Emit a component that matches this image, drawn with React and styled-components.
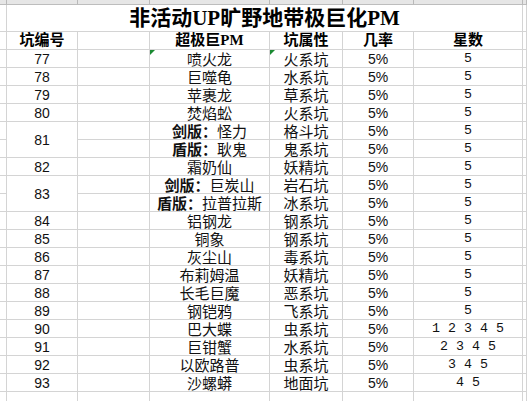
import React from 'react'
import styled, { createGlobalStyle, css } from 'styled-components'

// STYLES
const GlobalStyle = createGlobalStyle`
  html, body {
    margin: 0;
    padding: 0;
    background: #fff;
  }
  body {
    font-family: "Noto Sans CJK SC", sans-serif;
    color: #000;
    overflow: hidden;
  }
`

const Sheet = styled.div`
  display: grid;
  grid-template-columns: 7px 71px 72px 120px 73px 71px 109px 1fr;
  grid-template-rows: 5px 27px 18px;
  grid-auto-rows: 18px;
  width: 527px;
  height: 401px;
  overflow: hidden;
  background: #fff;
`

const Cell = styled.div`
  position: relative;
  display: flex;
  align-items: center;
  justify-content: center;
  box-sizing: border-box;
  border-right: 1px solid #d4d4d4;
  border-bottom: 1px solid #d4d4d4;
  white-space: nowrap;
  font-size: 15px;
  line-height: 1;
  color: #111;
  ${p => p.$rows && css`grid-row: span ${p.$rows};`}
  ${p => p.$cols && css`grid-column: span ${p.$cols};`}
`

const ColHead = styled(Cell)`
  background: #e6e6e6;
  border-right-color: #b9b9b9;
  border-bottom-color: #bdbdbd;
`

const Title = styled(Cell)`
  font-family: "Liberation Serif", "Noto Sans CJK SC", serif;
  font-weight: bold;
  font-size: 21px;
  color: #000;
  padding-top: 1px;
`

const Head = styled(Cell)`
  font-family: "Liberation Serif", "Noto Sans CJK SC", serif;
  font-weight: bold;
  font-size: 15px;
  color: #000;
`

const Num = styled(Cell)`
  font-family: "Liberation Sans", sans-serif;
  font-size: 14px;
`

const Stars = styled(Cell)`
  font-family: "Liberation Mono", monospace;
  font-size: 13.3px;
  white-space: pre;
`

const Tag = styled.b`
  font-weight: bold;
`

const Flag = styled.span`
  position: absolute;
  top: 0;
  left: 0;
  width: 0;
  height: 0;
  border-top: 5px solid #1a8a32;
  border-right: 5px solid transparent;
`

const rows = [
  { no: '77', name: '喷火龙', type: '火系坑', stars: '5', flag: true },
  { no: '78', name: '巨噬龟', type: '水系坑', stars: '5' },
  { no: '79', name: '苹裹龙', type: '草系坑', stars: '5' },
  { no: '80', name: '焚焰蚣', type: '火系坑', stars: '5' },
  { no: '81', subs: [
    { tag: '剑版：', name: '怪力', type: '格斗坑', stars: '5' },
    { tag: '盾版：', name: '耿鬼', type: '鬼系坑', stars: '5' },
  ] },
  { no: '82', name: '霜奶仙', type: '妖精坑', stars: '5' },
  { no: '83', subs: [
    { tag: '剑版：', name: '巨炭山', type: '岩石坑', stars: '5' },
    { tag: '盾版：', name: '拉普拉斯', type: '冰系坑', stars: '5' },
  ] },
  { no: '84', name: '铝钢龙', type: '钢系坑', stars: '5' },
  { no: '85', name: '铜象', type: '钢系坑', stars: '5' },
  { no: '86', name: '灰尘山', type: '毒系坑', stars: '5' },
  { no: '87', name: '布莉姆温', type: '妖精坑', stars: '5' },
  { no: '88', name: '长毛巨魔', type: '恶系坑', stars: '5' },
  { no: '89', name: '钢铠鸦', type: '飞系坑', stars: '5' },
  { no: '90', name: '巴大蝶', type: '虫系坑', stars: '1 2 3 4 5' },
  { no: '91', name: '巨钳蟹', type: '水系坑', stars: '2 3 4 5' },
  { no: '92', name: '以欧路普', type: '虫系坑', stars: '3 4 5' },
  { no: '93', name: '沙螺蟒', type: '地面坑', stars: '4 5' },
]

const Rest = ({ item }) => (
  <>
    <Cell />
    <Cell>
      {item.flag && <Flag />}
      {item.tag && <Tag>{item.tag}</Tag>}
      {item.name}
    </Cell>
    <Cell>
      {item.flag && <Flag />}
      {item.type}
    </Cell>
    <Num>5%</Num>
    <Stars>{item.stars}</Stars>
    <Cell />
  </>
)

const App = () => {
  return (
    <>
      <GlobalStyle />
      <Sheet>
        {[0, 1, 2, 3, 4, 5, 6, 7].map(i => <ColHead key={'h' + i} />)}

        <Cell />
        <Title $cols={6}>非活动UP旷野地带极巨化PM</Title>
        <Cell />

        <Cell />
        <Head>坑编号</Head>
        <Cell />
        <Head>超极巨PM</Head>
        <Head>坑属性</Head>
        <Head>几率</Head>
        <Head>星数</Head>
        <Cell />

        {rows.map(r => r.subs ? (
          <React.Fragment key={r.no}>
            <Cell />
            <Num $rows={2}>{r.no}</Num>
            <Rest item={r.subs[0]} />
            <Cell />
            <Rest item={r.subs[1]} />
          </React.Fragment>
        ) : (
          <React.Fragment key={r.no}>
            <Cell />
            <Num>{r.no}</Num>
            <Rest item={r} />
          </React.Fragment>
        ))}

        {[0, 1, 2, 3, 4, 5, 6, 7].map(i => <Cell key={'e' + i} />)}
      </Sheet>
    </>
  )
}

export default App
